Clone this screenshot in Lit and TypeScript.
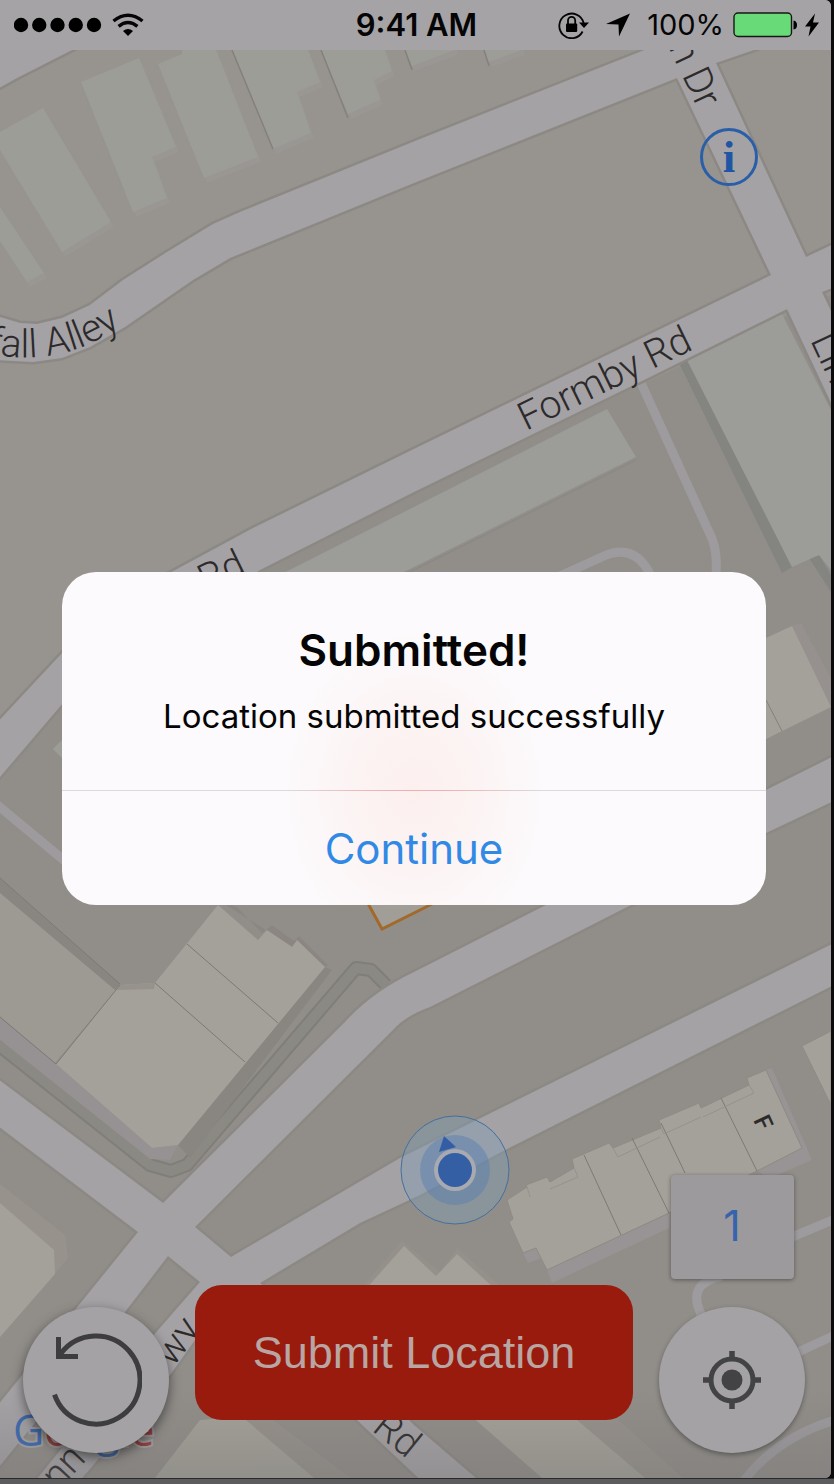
import { LitElement, html, svg, css } from "lit";
import { customElement, property } from "lit/decorators.js";

const ROADS = [
  // Wall Alley and its continuation to the north east, joined to the drive and Formby Rd
  "M0 317 L20 323 L37 324 L62 318 L90 305 L123 280 L167 252 L213 224 L240 212 L420 139 L647 49 L647 30 L800 30 L754 50 L716 63 L806 257 L840 241 L840 285 L822 292 L840 330 L840 422 L787 309 L644 380 L414 492 L260 570 L63 703 L-6 784 L-6 726 L63 652 L140 589 L253 528 L420 446 L759 281 L771 275 L677 78 L414 183 L230 258 L193 280 L125 327 L90 347 L62 358 L33 362 L-6 360 L-6 317 Z",
  "M-6 91 L17 78 L72 50 L100 36 L-6 36 Z",
  // southern crossroads
  "M-6 1076 L163 1203 L178 1188 L345 1022 Q372 992 414 972 L546 905 L766 790 L840 753 L840 798 L766 833 L631 905 L430 1007 Q405 1016 393 1030 L195 1227 L231 1257 L400 1158 L840 940 L840 982 L507 1149 L420 1195 L360 1223 L260 1283 L340 1350 L414 1425 L490 1490 L431 1490 L357 1420 L250 1320 L195 1340 L170 1375 L72 1490 L28 1490 L145 1345 L200 1282 L168 1256 L125 1312 L-6 1473 L-6 1410 L138 1232 L-6 1123 Z",
];

const UPPER_BUILDINGS = [
  "M0 132 L43 108 L111 222 L62 252 L0 150 Z",
  "M0 207 L44 273 L27 282 L0 241 Z",
  "M81 82 L139 58 L176 147 L152 157 L167 198 L133 212 Z",
  "M158 64 L182 54 L182 40 L212 40 L258 157 L204 178 Z",
  "M228 40 L304 40 L320 82 L297 92 L311 133 L273 149 Z",
  "M317 40 L381 40 L392 71 L374 80 L380 100 L348 114 Z",
  "M401 40 L412 66 L454 50 L454 40 Z",
  "M480 40 L489 62 L521 50 L521 40 Z",
];

const HOUSES =
  "M507 1200 L527 1187 L526 1185 L547 1177 L550 1182 L574 1168 L572 1159 L609 1143 L613 1148 L661 1128 L659 1120 L699 1103 L701 1108 L749 1085 L747 1078 L766 1070 L802 1148 L757 1171 L669 1213 L547 1270 L536 1248 L523 1253 L509 1222 L513 1219 Z";

@customElement("street-map")
export class StreetMap extends LitElement {
  static styles = css`
    :host {
      display: grid;
      contain: size;
      overflow: hidden;
    }
    .canvas {
      display: block;
      width: 100%;
      height: 100%;
    }
    .street {
      font: 300 39px Roboto, "Liberation Sans", sans-serif;
      fill: #2c2a2b;
    }
    .unit {
      font: 500 24px Roboto, "Liberation Sans", sans-serif;
      fill: #2c2a2b;
    }
    .brand {
      font: 500 43px "Open Sans", "Liberation Sans", sans-serif;
      paint-order: stroke;
      stroke: #a4a2a5;
      stroke-width: 4px;
    }
    .blue {
      fill: #3a68b0;
    }
    .red {
      fill: #a03a38;
    }
    .yellow {
      fill: #a8893a;
    }
    .green {
      fill: #3a8a50;
    }
  `;

  render() {
    return html`
      <svg class="canvas" viewBox="0 0 831 1478" preserveAspectRatio="xMidYMid slice" role="img" aria-label="Street map">
        <defs>
          <path id="alley" d="M-13 353 Q34 364 80 348 Q108 338 165 296" />
          <linearGradient id="shade" x1="0" y1="0" x2="0" y2="1">
            <stop offset="0" stop-color="#6b6967" stop-opacity="0" />
            <stop offset="1" stop-color="#6b6967" stop-opacity="0.3" />
          </linearGradient>
        </defs>
        <rect width="831" height="1478" fill="#97938e" />
        <path d="M831 295 L414 492 L260 570 L63 703 L0 778 V1478 H831 Z" fill="#918e8a" />

        ${UPPER_BUILDINGS.map((d) => svg`<path d=${d} fill="#999693" transform="translate(3 5)" />`)}
        ${UPPER_BUILDINGS.map((d) => svg`<path d=${d} fill="#9d9d98" />`)}
        <path d="M232 50 L273 149 M321 50 L348 118 M405 50 L412 70 M484 50 L489 66" stroke="#84817d" stroke-width="1.5" fill="none" />

        <path d="M607 409 L636 457 L404 572 L250 590 Z" fill="#9c9c98" />
        <path d="M636 460 L404 575" stroke="#898682" stroke-width="1" />
        <path d="M680 365 L687 360 L792 567 L782 573 Z" fill="#848480" />
        <path d="M809 558 L819 555 L831 575 V592 Z" fill="#848480" />
        <path d="M687 360 L781 312 L831 410 V570 L819 555 L792 567 Z" fill="#9c9c98" />

        <g fill="none" stroke="#9d9b9e" stroke-width="9">
          <path d="M641 383 L709 532 Q718 548 716 574" />
          <path d="M520 594 L604 556 Q634 543 650 574" />
          <path d="M-5 803 L66 862" />
          <path d="M785 1240 L835 1219" />
          <path d="M722 1276 Q684 1284 703 1318" />
          <path d="M796 1353 L835 1335" />
          <path d="M743 1482 Q776 1438 835 1420" />
        </g>

        <g fill="none" stroke-linejoin="round">
          <path d="M-4 1043 L150 1165 L171 1171 L187 1165 L356 968 L371 970 L386 985" stroke="#807e79" stroke-width="14" />
          <path d="M-4 1043 L150 1165 L171 1171 L187 1165 L356 968 L371 970 L386 985" stroke="#8b8983" stroke-width="10" />
        </g>

        ${ROADS.map((d) => svg`<path d=${d} fill="none" stroke="#8c8985" stroke-width="5" stroke-linejoin="round" />`)}
        ${ROADS.map((d) => svg`<path d=${d} fill="#a4a2a5" />`)}

        <path d="M792 626 L801 623 L831 678 V707 Z" fill="#96918f" />
        <path d="M700 668 L792 626 L831 707 L766 739 L720 760 Z" fill="#a3a199" />
        <path d="M766 700 L782 731" stroke="#85827d" />
        <path d="M53 749 L66 736 V762 Z" fill="#9d9d98" />

        <path d="M0 878 L13 890 L120 984 L115 990 L0 893 Z" fill="#898581" />
        <path d="M0 893 L115 990 L120 985 L55 1063 L0 1017 Z" fill="#9c9a93" />
        <path d="M0 1017 L55 1063 L152 1148 L178 1145 L170 1160 L150 1159 L0 1040 Z" fill="#969192" />
        <path d="M218 900 L237 907 L262 933 L272 925 L294 941 L299 936 L328 965 L325 967 Z" fill="#8b8681" />
        <path d="M325 967 L332 970 L190 1158 L178 1145 Z" fill="#898682" />
        <path d="M120 985 L155 983 L218 905 L258 940 L267 930 L292 947 L297 940 L325 967 L178 1145 L152 1148 L56 1064 Z" fill="#a3a199" />
        <path d="M120 985 L155 983 L154 989 L117 990 Z" fill="#98928c" />
        <path d="M0 878 L120 984 M0 1017 L56 1064 L120 985 M155 983 L245 1062 M187 944 L278 1023" fill="none" stroke="#7d7974" />

        <path d="M366 900 L382 929 L436 902" fill="#a09e96" stroke="#a2692a" stroke-width="3" />

        <path d="M547 1270 L552 1283 L669 1228 L670 1213 Z M802 1148 L812 1160 L770 1178 L757 1171 Z M766 1070 L772 1068 L812 1160 L802 1148 Z M523 1253 L528 1263 L542 1258 L536 1248 Z" fill="#989394" />
        <path d=${HOUSES} fill="#a3a199" stroke="#918a83" />
        <path d="M721 1098 L757 1171 M661 1123 L685 1173 M632 1138 L669 1213 M584 1155 L621 1235" stroke="#7d7a75" fill="none" />
        <path d="M749 1085 L754 1093 L703 1117 M661 1128 L664 1134 L701 1117 M613 1148 L618 1157 L660 1137 M574 1168 L578 1177 L550 1189 M527 1187 L530 1197" stroke="#96928b" fill="none" />
        <path d="M802 1046 L831 1031 V1105 Z" fill="#a3a199" stroke="#918a83" />

        <path d="M0 1184 L65 1235 L68 1258 L0 1337 Z" fill="#98928c" />
        <path d="M0 1203 L54 1250 L55 1274 L0 1337 Z" fill="#a3a199" />
        <path d="M360 1290 L392 1252 L402 1241 L440 1272 L457 1248 L505 1290 Z" fill="#96908a" />
        <path d="M365 1290 L404 1246 L436 1276 L440 1272 L457 1254 L496 1290 Z" fill="#a3a199" />
        <path d="M200 1420 L155 1478 H350 L265 1415 Z" fill="#a3a199" />
        <path d="M240 1415 L314 1478 H350 L265 1415 Z" fill="#96918b" />
        <path d="M470 1415 L542 1478 H682 L612 1415 Z" fill="#a3a199" />
        <path d="M577 1420 L645 1478 H682 L612 1415 Z" fill="#96918b" />

        <text class="street" transform="translate(526 431) rotate(-26)">Formby Rd</text>
        <text class="street" transform="translate(698 110) rotate(65)" text-anchor="end">n Dr</text>
        <text class="street" transform="translate(810 340) rotate(65)">Lin</text>
        <text class="street"><textPath href="#alley">fall Alley</textPath></text>
        <text class="street" transform="translate(206 593) rotate(-26)">Rd</text>
        <text class="street" transform="translate(173 1368) rotate(-54)">wy</text>
        <text class="street" transform="translate(58 1491) rotate(-47)">nn</text>
        <text class="street" transform="translate(371 1430) rotate(39)">Rd</text>
        <text class="unit" transform="translate(753 1120) rotate(65)">F</text>
        <text class="brand" x="13" y="1446"><tspan class="blue">G</tspan><tspan class="red">o</tspan><tspan class="yellow">o</tspan><tspan class="blue">g</tspan><tspan class="green">l</tspan><tspan class="red">e</tspan></text>

        <rect y="1390" width="831" height="88" fill="url(#shade)" />

        <circle cx="455" cy="1170" r="54" fill="#7f9db8" fill-opacity="0.38" stroke="#446f9c" />
        <circle cx="455" cy="1170" r="35" fill="#5c80b0" fill-opacity="0.5" />
        <path d="M444 1136 L439 1152 L456 1147 Z" fill="#345ea4" />
        <circle cx="455" cy="1170" r="21" fill="#a9a9b0" />
        <circle cx="455" cy="1170" r="17" fill="#345fa5" />
      </svg>
    `;
  }
}

@customElement("status-bar")
export class StatusBar extends LitElement {
  static styles = css`
    :host {
      display: grid;
      grid-template-columns: 1fr auto 1fr;
      align-items: center;
      height: 50px;
      padding: 0 12px 0 14px;
      background: #a5a3a6;
      color: #050505;
      font: 400 29px/50px Inter, "Liberation Sans", sans-serif;
    }
    .side {
      display: flex;
      align-items: center;
    }
    .end {
      justify-content: flex-end;
    }
    .time {
      font-size: 31px;
      font-weight: 600;
    }
    svg {
      display: block;
    }
    .wifi {
      margin-left: 10px;
    }
    .lock {
      margin-right: 16px;
    }
    .arrow {
      margin-right: 17px;
    }
    .battery {
      margin-left: 9px;
    }
    .bolt {
      margin-left: 8px;
    }
  `;

  render() {
    return html`
      <div class="side">
        <svg width="88" height="16" viewBox="0 0 88 16" role="img" aria-label="Signal strength">
          ${[0, 1, 2, 3, 4].map((i) => svg`<circle cx=${7 + i * 18.25} cy="8" r="7.2" />`)}
        </svg>
        <svg class="wifi" width="32" height="24" viewBox="0 0 32 24" role="img" aria-label="Wi-Fi">
          <g fill="none" stroke="#050505" stroke-width="3.4">
            <path d="M1.5 8 Q16 -3.6 30.500 8" />
            <path d="M6.600 13.400 Q16 5.800 25.400 13.400" />
          </g>
          <path d="M11 18 Q16 14 21 18 L16 23 Z" />
        </svg>
      </div>
      <span class="time">9:41 AM</span>
      <div class="side end">
        <svg class="lock" width="32" height="28" viewBox="0 0 32 28" role="img" aria-label="Rotation locked">
          <g fill="none" stroke="#050505" stroke-width="1.8">
            <path d="M24.600 20.500 A12.300 12.300 0 1 1 25.600 12" />
            <path d="M10 13 V9.500 a3.600 3.600 0 0 1 7.200 0 V13" />
          </g>
          <rect x="8" y="12.500" width="11.200" height="8.500" rx="1" />
          <path d="M21 11.500 H31 L26 17 Z" />
        </svg>
        <svg class="arrow" width="24" height="24" viewBox="0 0 24 24" role="img" aria-label="Location in use">
          <path d="M24 0.500 L13 23.500 L12.500 11.500 L0 11 Z" />
        </svg>
        <span>100%</span>
        <svg class="battery" width="64" height="26" viewBox="0 0 64 26" role="img" aria-label="Battery full">
          <rect x="1" y="1" width="57.500" height="23.500" rx="4" fill="#68da78" stroke="#171717" stroke-width="1.400" />
          <path d="M60.500 8.500 Q64 9 64 13 Q64 17 60.500 17.500 Z" />
        </svg>
        <svg class="bolt" width="14" height="24" viewBox="0 0 14 24" role="img" aria-label="Charging">
          <path d="M10 0.500 L0 13.500 H5.500 L3.500 23.500 L14 9.500 H8 Z" />
        </svg>
      </div>
    `;
  }
}

@customElement("alert-dialog")
export class AlertDialog extends LitElement {
  @property() heading = "";
  @property() message = "";
  @property() action = "";

  static styles = css`
    :host {
      display: block;
    }
    .card {
      overflow: hidden;
      border-radius: 34px;
      background: radial-gradient(ellipse 130px 160px at 50% 66%, #fcf0ef 0%, #fcf3f3 45%, #fcfafc 100%);
      color: #050505;
      text-align: center;
      font-family: Inter, "Liberation Sans", sans-serif;
    }
    .body {
      padding: 52px 32px 54px;
    }
    .title {
      margin: 0 0 20px;
      font-size: 44px;
      line-height: 52px;
      font-weight: 600;
    }
    .text {
      margin: 0;
      font-size: 33px;
      line-height: 40px;
    }
    .rule {
      height: 1px;
      background: linear-gradient(to right, #dcd8dc 32%, #f0b0b0 46%, #f0b0b0 54%, #dcd8dc 68%);
    }
    .action {
      display: block;
      width: 100%;
      height: 114px;
      padding: 2px 0 0;
      border: 0;
      background: none;
      color: #3189e6;
      font: 400 42px/52px Inter, "Liberation Sans", sans-serif;
      cursor: pointer;
    }
  `;

  render() {
    return html`
      <section class="card" role="alertdialog" aria-labelledby="title" aria-describedby="text">
        <div class="body">
          <h1 class="title" id="title">${this.heading}</h1>
          <p class="text" id="text">${this.message}</p>
        </div>
        <div class="rule"></div>
        <button class="action" type="button">${this.action}</button>
      </section>
    `;
  }
}

@customElement("app-root")
export class AppRoot extends LitElement {
  static styles = css`
    :host {
      display: grid;
      box-sizing: border-box;
      min-height: 100vh;
      padding: 0 3px 6px 0;
      background: linear-gradient(to top, #5c5b5e 5px, #2a2a2b 5px, #2a2a2b 6px, #0c0a0c 6px);
    }
    .screen {
      display: grid;
      grid-template: minmax(0, 1fr) / minmax(0, 1fr);
      overflow: hidden;
      border-radius: 0 6px 6px 0;
    }
    .layer {
      grid-area: 1 / 1;
    }
    .chrome {
      display: flex;
      flex-direction: column;
      justify-content: space-between;
    }
    .tools {
      display: flex;
      justify-content: flex-end;
      padding: 78px 73px 0 0;
    }
    button {
      padding: 0;
      border: 0;
      cursor: pointer;
    }
    svg {
      display: block;
    }
    .info {
      box-sizing: border-box;
      width: 58px;
      height: 58px;
      border: 3px solid #2a5fa8;
      border-radius: 50%;
      background: none;
      color: #1f56a4;
      font: 700 45px/50px "Liberation Serif", serif;
    }
    .controls {
      display: grid;
      grid-template-columns: auto minmax(0, 1fr) auto;
      align-items: end;
      gap: 26px;
      padding: 0 26px 25px 23px;
    }
    .round {
      display: grid;
      place-items: center;
      width: 146px;
      height: 146px;
      border-radius: 50%;
      background: #a4a2a5;
      box-shadow: 0 2px 5px rgb(0 0 0 / 35%);
    }
    .reset {
      box-shadow: 0 4px 12px rgb(0 0 0 / 50%);
    }
    .submit {
      height: 135px;
      margin-bottom: 33px;
      border-radius: 27px;
      background: #981b0e;
      color: #b9a5a2;
      font: 400 45px/56px "Liberation Sans", Arial, sans-serif;
    }
    .stack {
      display: grid;
      justify-items: center;
      gap: 28px;
    }
    .count {
      display: block;
      width: 123px;
      padding-bottom: 4px;
      border-radius: 4px;
      background: #9c9a9d;
      box-shadow: 0 1px 4px rgb(0 0 0 / 40%);
      color: #3763ac;
      text-align: center;
      font: 400 43px/100px Inter, "Liberation Sans", sans-serif;
    }
    .modal {
      display: grid;
      align-items: center;
      padding: 0 65px 2px 62px;
    }
  `;

  render() {
    return html`
      <main class="screen">
        <street-map class="layer"></street-map>
        <div class="layer chrome">
          <div>
            <status-bar></status-bar>
            <div class="tools">
              <button class="info" type="button" aria-label="Information">i</button>
            </div>
          </div>
          <div class="controls">
            <button class="round reset" type="button" aria-label="Reset">
              <svg width="92" height="96" viewBox="0 0 92 96" fill="none" stroke="#3d3c3e" stroke-width="5">
                <path d="M4.500 62.600 A44 44 0 1 0 11 21.300 L8 25" />
                <path d="M8.500 5 V24.500 H28" />
              </svg>
            </button>
            <button class="submit" type="button">Submit Location</button>
            <div class="stack">
              <output class="count" aria-label="Locations">1</output>
              <button class="round" type="button" aria-label="My location">
                <svg width="58" height="58" viewBox="0 0 58 58">
                  <circle cx="29" cy="29" r="21" fill="none" stroke="#434244" stroke-width="5" />
                  <circle cx="29" cy="29" r="10.500" fill="#434244" />
                  <path d="M29 0 V8 M29 50 V58 M0 29 H8 M50 29 H58" stroke="#434244" stroke-width="5.500" />
                </svg>
              </button>
            </div>
          </div>
        </div>
        <div class="layer modal">
          <alert-dialog heading="Submitted!" message="Location submitted successfully" action="Continue"></alert-dialog>
        </div>
      </main>
    `;
  }
}
